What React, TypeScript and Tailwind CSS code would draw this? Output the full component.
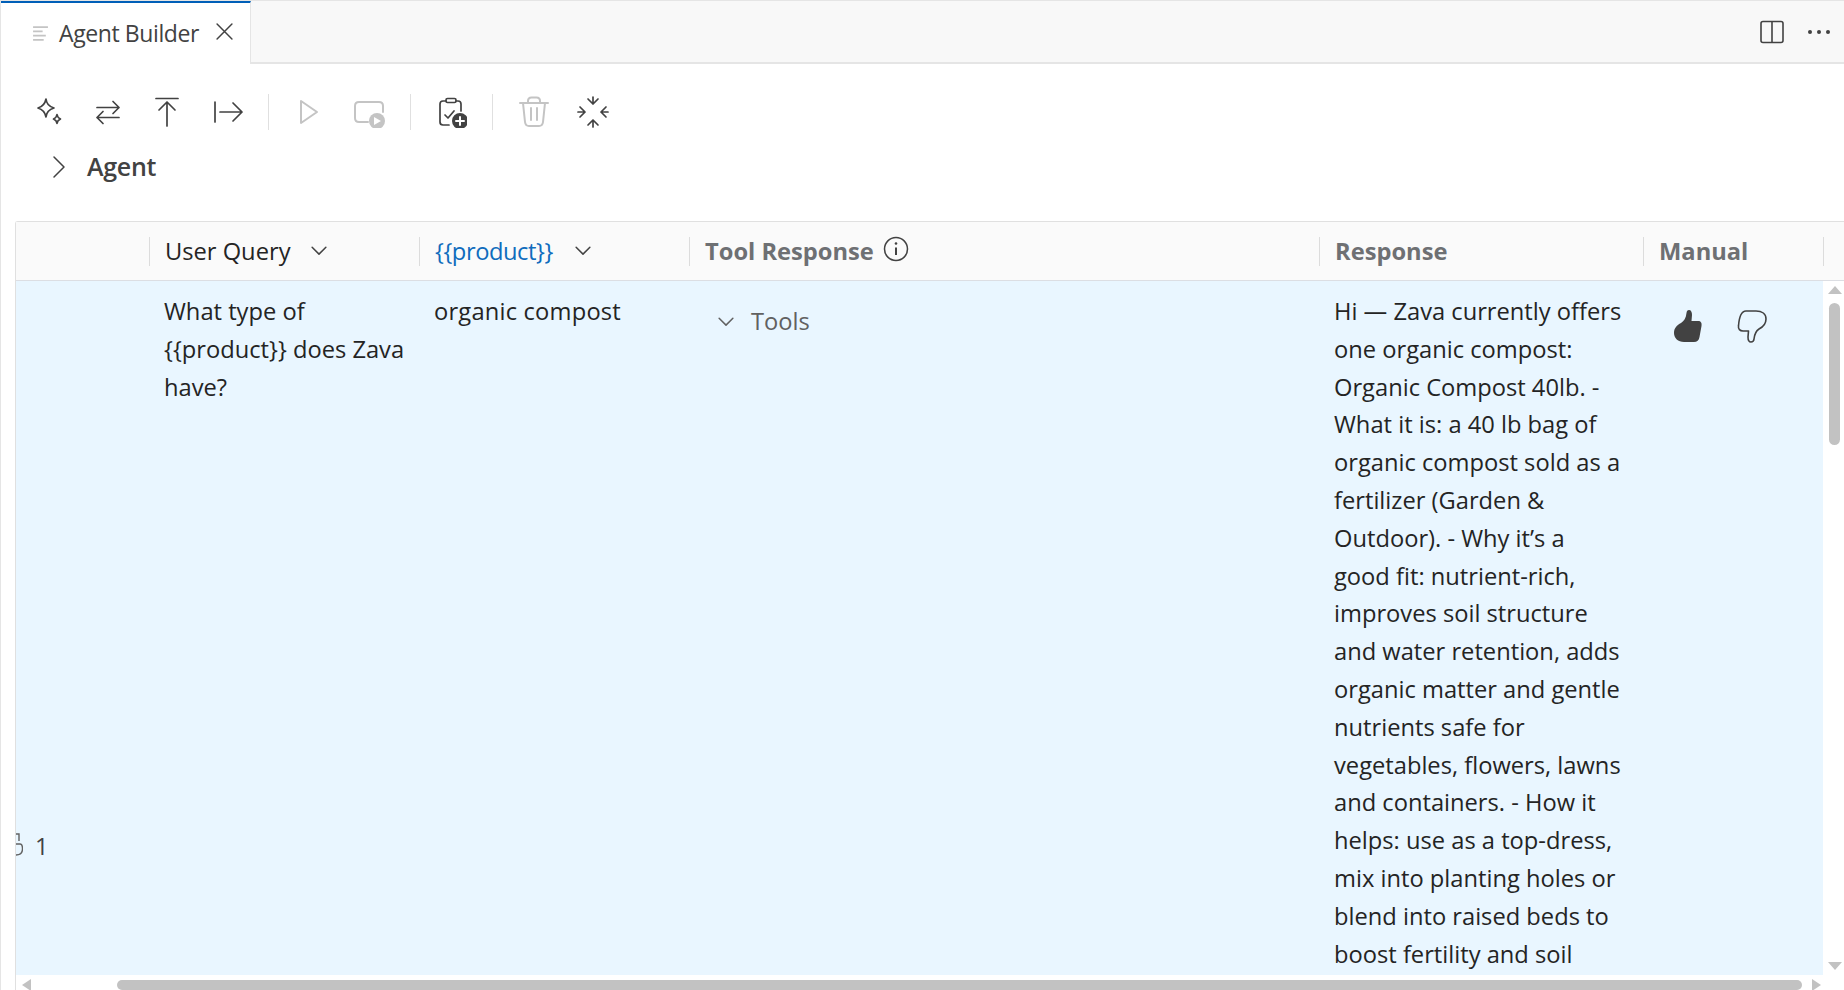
import type { ReactNode } from "react";

const responseLines = [
  "Hi — Zava currently offers",
  "one organic compost:",
  "Organic Compost 40lb. -",
  "What it is: a 40 lb bag of",
  "organic compost sold as a",
  "fertilizer (Garden &",
  "Outdoor). - Why it’s a",
  "good fit: nutrient-rich,",
  "improves soil structure",
  "and water retention, adds",
  "organic matter and gentle",
  "nutrients safe for",
  "vegetables, flowers, lawns",
  "and containers. - How it",
  "helps: use as a top-dress,",
  "mix into planting holes or",
  "blend into raised beds to",
  "boost fertility and soil",
];

const queryLines = ["What type of", "{{product}} does Zava", "have?"];

function ToolIcon({ children, disabled }: { children: ReactNode; disabled?: boolean }) {
  return (
    <div className="w-[60px] h-8 flex justify-center shrink-0">
      <svg
        viewBox="0 0 32 32"
        className={disabled ? "w-8 h-8 text-[#c4c4c4]" : "w-8 h-8 text-[#424242]"}
        fill="none"
        stroke="currentColor"
        strokeWidth="1.7"
        strokeLinecap="round"
        strokeLinejoin="round"
      >
        {children}
      </svg>
    </div>
  );
}

function Divider() {
  return <div className="w-px h-[36px] bg-[#e0e0e0] mx-[10px] shrink-0" />;
}

function Chevron({ className }: { className: string }) {
  return (
    <svg viewBox="0 0 16 16" className={className} fill="none" stroke="currentColor" strokeWidth="1.2" strokeLinecap="round" strokeLinejoin="round">
      <path d="M2.5 5 L8 10.5 L13.5 5" />
    </svg>
  );
}

function HeaderCell({ children }: { children?: ReactNode }) {
  return (
    <div className="flex items-center h-full">
      <div className="w-px h-[29px] bg-[#dcdcdc] shrink-0" />
      <div className="flex items-center pl-[15px] pt-px flex-1 min-w-0">{children}</div>
    </div>
  );
}

export default function App() {
  return (
    <div
      className="w-full h-[990px] overflow-hidden bg-white text-[#242424] border-l border-t border-[#e5e5e5] flex flex-col text-[23.7px] leading-[37.8px]"
      style={{ fontFamily: '"Open Sans", "Noto Sans", sans-serif' }}
    >
      {/* tab bar */}
      <div className="h-[63px] shrink-0 flex bg-[#f8f8f8] border-b-2 border-[#e5e5e5]">
        <div className="w-[250px] h-[63px] bg-white border-t-2 border-[#005fb8] border-r border-r-[#e5e5e5] flex items-center pl-[31px]">
          <svg viewBox="0 0 16 16" className="w-[17px] h-[17px] text-[#c4c4c4] shrink-0" stroke="currentColor" strokeWidth="1.8" fill="none">
            <path d="M1 2 H15 M1 6 H10 M1 10 H13 M1 14 H11" />
          </svg>
          <span className="ml-[10px] text-[23px] text-[#424242] tracking-[-0.4px] whitespace-nowrap">Agent Builder</span>
          <svg viewBox="0 0 16 16" className="ml-[17px] w-[17px] h-[17px] text-[#424242] shrink-0 -translate-y-0.5" stroke="currentColor" strokeWidth="1.4" strokeLinecap="round" fill="none">
            <path d="M1 1 L15 15 M15 1 L1 15" />
          </svg>
        </div>
        <div className="flex-1 flex items-center justify-end pr-[14px] gap-[24px]">
          <svg viewBox="0 0 24 24" className="w-6 h-6 text-[#424242]" fill="none" stroke="currentColor" strokeWidth="1.6">
            <rect x="1" y="1.5" width="22" height="21" rx="2" />
            <path d="M12 1.5 V22.5" />
          </svg>
          <div className="flex gap-[5px]">
            <div className="w-1 h-1 rounded-full bg-[#424242]" />
            <div className="w-1 h-1 rounded-full bg-[#424242]" />
            <div className="w-1 h-1 rounded-full bg-[#424242]" />
          </div>
        </div>
      </div>

      {/* toolbar */}
      <div className="shrink-0 flex items-center h-[32px] mt-[32px] pl-[17px]">
        <ToolIcon>
          <path d="M14 3 C14.5 8 16.5 10.5 22 12 C17 13.5 14.5 16 14 21 C13 16 11 13.5 6 12 C11 10.5 13 8 14 3 Z" />
          <path d="M25 18.5 C25.3 21 26.2 22 28.5 23 C26.2 24 25.3 25 25 27.5 C24.7 25 23.8 24 21.5 23 C23.8 22 24.7 21 25 18.5 Z" />
        </ToolIcon>
        <ToolIcon>
          <path d="M5 11.5 H27 M21 5.5 L27 11.5 L21 17.5" />
          <path d="M27 21.5 H5 M11 15.5 L5 21.5 L11 27.5" />
        </ToolIcon>
        <div className="-ml-px">
          <ToolIcon>
            <path d="M5 2.5 H27" />
            <path d="M16 6 V30 M8 14 L16 6 L24 14" />
          </ToolIcon>
        </div>
        <div className="ml-px">
          <ToolIcon>
            <path d="M3 6 V26" />
            <path d="M8 16 H30 M21 7 L30 16 L21 25" />
          </ToolIcon>
        </div>
        <Divider />
        <ToolIcon disabled>
          <path d="M8 5 L24 16 L8 27 Z" strokeWidth="2" />
        </ToolIcon>
        <ToolIcon disabled>
          <path d="M15 26 H6 Q2 26 2 22 V10 Q2 6 6 6 H26 Q30 6 30 10 V16" strokeWidth="2" />
          <circle cx="24" cy="25" r="8" fill="currentColor" stroke="none" />
          <path d="M21 21 L28 25 L21 29 Z" fill="#fff" stroke="none" />
        </ToolIcon>
        <div className="ml-px">
          <Divider />
        </div>
        <ToolIcon>
          <path d="M11 5 H8 Q5 5 5 8 V26 Q5 29 8 29 H14" />
          <path d="M21 5 H23 Q26 5 26 8 V15" />
          <rect x="11" y="2.5" width="10" height="4" rx="1.5" />
          <path d="M10 19 L13 22 L19 15" />
          <circle cx="25" cy="25" r="8" fill="currentColor" stroke="none" />
          <path d="M25 21 V29 M21 25 H29" stroke="#fff" strokeWidth="2" />
        </ToolIcon>
        <div className="ml-px">
          <Divider />
        </div>
        <div className="ml-px">
          <ToolIcon disabled>
            <path d="M2 7 H30 M10 7 V5 Q10 1.5 13.5 1.5 H18.5 Q22 1.5 22 5 V7" strokeWidth="2" />
            <path d="M5 7 L7 26 Q7.5 30 11 30 H21 Q24.5 30 25 26 L27 7" strokeWidth="2" />
            <path d="M13 12 V24 M19 12 V24" strokeWidth="2" />
          </ToolIcon>
        </div>
        <div className="-ml-px">
          <ToolIcon>
            <path d="M16 1 V8 M11 3 L16 8 L21 3" />
            <path d="M16 31 V24 M11 29 L16 24 L21 29" />
            <path d="M1 16 H8 M3 11 L8 16 L3 21" />
            <path d="M31 16 H24 M29 11 L24 16 L29 21" />
          </ToolIcon>
        </div>
      </div>

      {/* agent section */}
      <div className="shrink-0 flex items-center h-[38px] mt-[20px] pl-[50px]">
        <svg viewBox="0 0 16 24" className="w-[16px] h-[24px] text-[#424242]" fill="none" stroke="currentColor" strokeWidth="1.5" strokeLinecap="round" strokeLinejoin="round">
          <path d="M3 2 L13 12 L3 22" />
        </svg>
        <span className="ml-[20px] text-[25px] font-semibold text-[#424242] tracking-[-0.3px]">Agent</span>
      </div>

      {/* table */}
      <div className="mt-[35px] ml-[14px] flex-1 min-h-0 flex flex-col border-l border-t border-[#e0e0e0] rounded-tl-[3px]">
        <div className="h-[59px] shrink-0 bg-[#fafafa] border-b border-[#dcdee3] grid grid-rows-[58px] grid-cols-[133px_270px_270px_630px_324px_180px_21px]">
          <div />
          <HeaderCell>
            <span className="whitespace-nowrap">User Query</span>
            <Chevron className="ml-[18px] w-[20px] h-[20px] text-[#424242]" />
          </HeaderCell>
          <HeaderCell>
            <span className="text-[#0f6cbd] whitespace-nowrap tracking-[-0.45px]">{"{{product}}"}</span>
            <Chevron className="ml-[20px] w-[20px] h-[20px] text-[#424242]" />
          </HeaderCell>
          <HeaderCell>
            <span className="font-bold text-[#6e7073] whitespace-nowrap">Tool Response</span>
            <svg viewBox="0 0 26 26" className="ml-[9px] w-[26px] h-[26px] text-[#424242] -translate-y-0.5" fill="none" stroke="currentColor" strokeWidth="1.5">
              <circle cx="13" cy="13" r="11.5" />
              <path d="M13 11.5 V19" strokeWidth="2" />
              <circle cx="13" cy="7.5" r="1.3" fill="currentColor" stroke="none" />
            </svg>
          </HeaderCell>
          <HeaderCell>
            <span className="font-bold text-[#6e7073] whitespace-nowrap">Response</span>
          </HeaderCell>
          <HeaderCell>
            <span className="font-bold text-[#6e7073] whitespace-nowrap">Manual</span>
          </HeaderCell>
          <HeaderCell />
          <div />
        </div>

        <div className="flex-1 min-h-0 flex">
          {/* row */}
          <div className="w-[1807px] shrink-0 bg-[#e9f6ff] overflow-hidden grid grid-cols-[133px_270px_270px_630px_324px_180px]">
            <div className="pt-[547px] flex items-start overflow-hidden">
              <svg viewBox="0 0 7 24" className="w-[7px] h-[24px] mt-[5px] text-[#616161] shrink-0" fill="none" stroke="currentColor" strokeWidth="1.4">
                <path d="M0 1 H3 V8 M0 11 H4 Q6.5 11 6.5 16 Q6.5 22 0 22" />
              </svg>
              <span className="ml-[12px] font-medium text-[#424242]">1</span>
            </div>
            <div className="pt-[12px] pl-[15px] text-[#242424] whitespace-nowrap">
              {queryLines.map((l) => (
                <div key={l}>{l}</div>
              ))}
            </div>
            <div className="pt-[12px] pl-[15px] whitespace-nowrap tracking-[0.2px]">organic compost</div>
            <div className="pt-[22px] pl-[27px] flex items-start">
              <Chevron className="mt-[9px] w-[20px] h-[20px] text-[#616161]" />
              <span className="ml-[15px] text-[#616161]">Tools</span>
            </div>
            <div className="pt-[12px] pl-[15px] whitespace-nowrap">
              {responseLines.map((l) => (
                <div key={l}>{l}</div>
              ))}
            </div>
            <div className="pt-[28px] pl-[30px] flex items-start gap-[34px]">
              <svg viewBox="0 0 30 34" className="w-[30px] h-[34px] text-[#424242]" fill="currentColor">
                <path d="M16 1 C18 1 19 3 19 6 L18.5 12 H25 C28 12 29 14 28.5 17 L26.5 28 C26 31.5 24 33 21 33 H11 C5 33 1 29 1 24 C1 19 4 16 8 14 C11 12 13 9 13.5 4 C13.7 2 14.5 1 16 1 Z" />
              </svg>
              <svg viewBox="0 0 30 34" className="w-[30px] h-[34px] text-[#424242]" fill="none" stroke="currentColor" strokeWidth="1.6" strokeLinejoin="round">
                <path d="M14 33 C12 33 11 31 11 28 L11.5 22 H6 C3 22 1 20 1.5 17 C2 10 4 2 9 2 H19 C25 2 29 5 29 10 C29 15 26 18 22 20 C19 22 17.5 25 17 30 C16.8 32 15.5 33 14 33 Z" />
              </svg>
            </div>
          </div>

          {/* vertical scrollbar */}
          <div className="flex-1 flex flex-col items-center pl-[2px] pt-[5px] bg-white">
            <div className="w-0 h-0 border-x-[7px] border-x-transparent border-b-[8px] border-b-[#c2c2c2]" />
            <div className="w-[11px] h-[142px] mt-[9px] rounded-full bg-[#c2c2c2]" />
            <div className="flex-1" />
            <div className="w-0 h-0 border-x-[7px] border-x-transparent border-t-[8px] border-t-[#c2c2c2] mb-[5px]" />
          </div>
        </div>

        {/* horizontal scrollbar */}
        <div className="h-[15px] shrink-0 flex items-end pl-[6px] bg-white">
          <div className="w-0 h-0 border-y-[6px] border-y-transparent border-r-[9px] border-r-[#c2c2c2] -mb-px" />
          <div className="ml-[86px] w-[1685px] h-[10px] rounded-full bg-[#c2c2c2]" />
          <div className="ml-[10px] w-0 h-0 border-y-[6px] border-y-transparent border-l-[9px] border-l-[#c2c2c2] -mb-px" />
        </div>
      </div>
    </div>
  );
}
